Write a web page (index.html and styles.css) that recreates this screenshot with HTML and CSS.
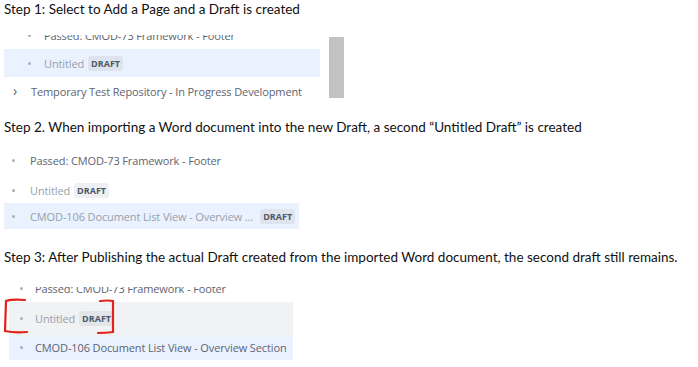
FILE: index.html
```html
<!DOCTYPE html>
<html lang="en">
<head>
  <meta charset="UTF-8" />
  <meta name="viewport" content="width=device-width, initial-scale=1.0" />
  <title>Untitled Draft steps</title>
  <link rel="stylesheet" href="styles.css">
</head>
<body>
  <!-- Step 1 -->
  <section class="step step-one">
    <p class="step-title">Step 1: Select to Add a Page and a Draft is created</p>
    <div class="tree-frame">
      <div class="tree-clip">
        <ul class="tree tree-one">
          <li class="row nested"><span class="dot"></span><span class="label">Passed: CMOD-73 Framework - Footer</span></li>
          <li class="row nested selected"><span class="dot"></span><span class="label muted">Untitled</span><span class="badge">DRAFT</span></li>
          <li class="row top"><span class="chevron">›</span><span class="label">Temporary Test Repository - In Progress Development</span></li>
        </ul>
      </div>
      <div class="scrollbar"></div>
    </div>
  </section>

  <!-- Step 2 -->
  <section class="step step-two">
    <p class="step-title">Step 2. When importing a Word document into the new Draft, a second “Untitled Draft” is created</p>
    <ul class="tree tree-two">
      <li class="row"><span class="dot"></span><span class="label">Passed: CMOD-73 Framework - Footer</span></li>
      <li class="row"><span class="dot"></span><span class="label muted">Untitled</span><span class="badge">DRAFT</span></li>
      <li class="row selected fit"><span class="dot"></span><span class="label muted">CMOD-106 Document List View - Overview ...</span><span class="badge">DRAFT</span></li>
    </ul>
  </section>

  <!-- Step 3 -->
  <section class="step step-three">
    <p class="step-title">Step 3: After Publishing the actual Draft created from the imported Word document, the second draft still remains.</p>
    <div class="tree-clip clip-three">
      <ul class="tree tree-three">
        <li class="row"><span class="dot"></span><span class="label">Passed: CMOD-73 Framework - Footer</span></li>
        <li class="row hover tall"><span class="dot"></span><span class="label muted">Untitled</span><span class="badge">DRAFT</span></li>
        <li class="row selected short"><span class="dot"></span><span class="label">CMOD-106 Document List View - Overview Section</span></li>
      </ul>
      <svg class="markup" width="120" height="40" viewBox="0 0 120 40">
        <path d="M25 2 Q12 1 6 3 L5 33 Q14 35 27 34" />
        <path d="M100 3 Q108 2 113 3 L113 34 Q106 35 98 35" />
      </svg>
    </div>
  </section>
</body>
</html>
```

FILE: styles.css
```css
body {
  margin: 0;
  background: #fff;
  font-family: "Open Sans", "Noto Sans", sans-serif;
}

.step-title {
  margin: 0;
  padding-left: 4px;
  height: 18px;
  line-height: 18px;
  font-family: Lato, "Open Sans", sans-serif;
  font-size: 13.5px;
  color: #111;
  white-space: nowrap;
}

.tree {
  list-style: none;
  margin: 0;
  padding: 0;
}

.row {
  display: flex;
  align-items: center;
  height: 28px;
  font-size: 11px;
  letter-spacing: -0.12px;
  color: #5e6470;
  white-space: nowrap;
}

.dot {
  flex: none;
  width: 3px;
  height: 3px;
  border-radius: 50%;
  background: #a9b0bb;
}

.chevron {
  width: 6px;
  font-size: 14px;
  line-height: 14px;
  color: #5e6470;
  text-align: center;
}

.label.muted {
  color: #99a0ab;
}

.badge {
  margin-left: 4px;
  padding: 0 3px;
  height: 15px;
  line-height: 15px;
  border-radius: 3px;
  background: #eef0f3;
  color: #4d5869;
  font-size: 9px;
  font-weight: 700;
  letter-spacing: 0;
}

.selected {
  background: #e9f2fe;
}

.selected .badge {
  background: #dde4ee;
}

.hover {
  background: #f1f2f4;
}

.hover .badge {
  background: #e3e5e9;
}

/* step 1 */
.tree-frame {
  display: flex;
  margin-top: 17px;
  height: 65px;
}

.tree-clip {
  overflow: hidden;
}

.step-one .tree-clip {
  width: 316px;
  margin-left: 4px;
}

.tree-one {
  margin-top: -14px;
}

.tree-one .nested {
  padding-left: 24px;
}

.tree-one .nested .dot {
  margin-right: 13px;
}

.tree-one .top {
  padding-left: 8px;
}

.tree-one .top .chevron {
  margin-right: 13px;
}

.scrollbar {
  margin: 2px 0 2px 9px;
  width: 15px;
  background: #c2c2c2;
}

/* step 2 */
.step-two {
  margin-top: 18px;
}

.tree-two {
  margin-top: 10px;
  padding-left: 4px;
}

.tree-two .row {
  padding-left: 8px;
}

.tree-two .dot {
  margin-right: 15px;
}

.tree-two .row:nth-child(2) {
  margin-top: 2px;
}

.tree-two .fit {
  width: fit-content;
  padding-right: 4px;
  height: 26px;
  margin-top: -1px;
}

.tree-two .fit .badge {
  margin-left: 7px;
}

/* step 3 */
.step-three {
  margin-top: 19px;
}

.clip-three {
  position: relative;
  margin-top: 21px;
  height: 73px;
}

.tree-three {
  margin-top: -13px;
  margin-left: 9px;
  width: 284px;
}

.tree-three .row {
  padding-left: 11px;
}

.tree-three .dot {
  margin-right: 12px;
}

.tree-three .tall {
  height: 35px;
  padding-bottom: 3px;
  box-sizing: border-box;
}

.tree-three .short {
  height: 23px;
  padding-bottom: 2px;
  box-sizing: border-box;
}

.markup {
  position: absolute;
  left: 0;
  top: 11px;
}

.markup path {
  fill: none;
  stroke: #e2231a;
  stroke-width: 2.2;
  stroke-linecap: round;
}
```
